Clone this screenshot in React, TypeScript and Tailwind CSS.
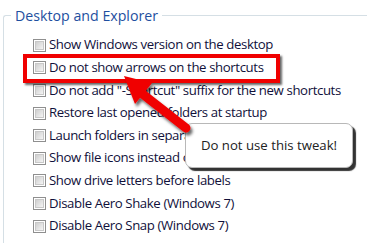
import React from "react";

const rows = [
  "Show Windows version on the desktop",
  "Do not show arrows on the shortcuts",
  "Do not add \"-Shortcut\" suffix for the new shortcuts",
  "Restore last opened folders at startup",
  "Launch folders in separate process",
  "Show file icons instead of thumbnails",
  "Show drive letters before labels",
  "Disable Aero Shake (Windows 7)",
  "Disable Aero Snap (Windows 7)",
];

function Check() {
  return (
    <div className="w-[13px] h-[13px] border border-[#8f8f8f] bg-white p-px shrink-0">
      <div className="w-full h-full bg-gradient-to-br from-[#cfcfcf] to-[#f4f4f4] border border-[#c8c8c8]" />
    </div>
  );
}

export default function App() {
  return (
    <div
      className="relative w-[385px] h-[251px] bg-white overflow-hidden"
      style={{ fontFamily: '"Open Sans", "Noto Sans", sans-serif' }}
    >
      <div className="relative ml-[3px] mt-[15px] w-[364px] h-[228px] border-l border-t border-[#d5dfe5] rounded-tl-[3px]">
        <div className="absolute -top-[11px] left-[7px] bg-white px-[4px] text-[14.2px] leading-[22px] text-[#1e4fa0]">
          Desktop and Explorer
        </div>
        <div className="flex flex-col pt-[18px] pl-[29px]">
          {rows.map((r) => (
            <div key={r} className="flex items-center gap-[3px] h-[22.6px] text-[13.2px] tracking-[-0.38px] text-[#10103a] whitespace-nowrap">
              <Check />
              <span>{r}</span>
            </div>
          ))}
        </div>
      </div>

      <div className="absolute left-[23px] top-[54px] w-[257px] h-[29px] border-[4px] border-[#f00000] shadow-[2px_2px_2px_rgba(0,0,0,0.6)]" />

      <div className="absolute left-[185px] top-[123px] w-[168px] h-[45px] rounded-[7px] border border-[#b8b8b8] bg-white shadow-[3px_3px_1px_rgba(0,0,0,0.8)] flex items-center justify-center text-[13.2px] text-[#222]">
        Do not use this tweak!
      </div>

      <svg className="absolute left-0 top-0" width="385" height="251" viewBox="0 0 385 251">
        <defs>
          <filter id="sh" x="-20%" y="-20%" width="140%" height="140%">
            <feDropShadow dx="2" dy="3" stdDeviation="1.5" floodColor="#000" floodOpacity="0.6" />
          </filter>
        </defs>
        <g filter="url(#sh)">
          <line x1="186" y1="128" x2="140" y2="92" stroke="#f00000" strokeWidth="9" strokeLinecap="round" />
          <polygon points="124,76 152,83 135,104" fill="#f00000" />
        </g>
      </svg>
    </div>
  );
}
